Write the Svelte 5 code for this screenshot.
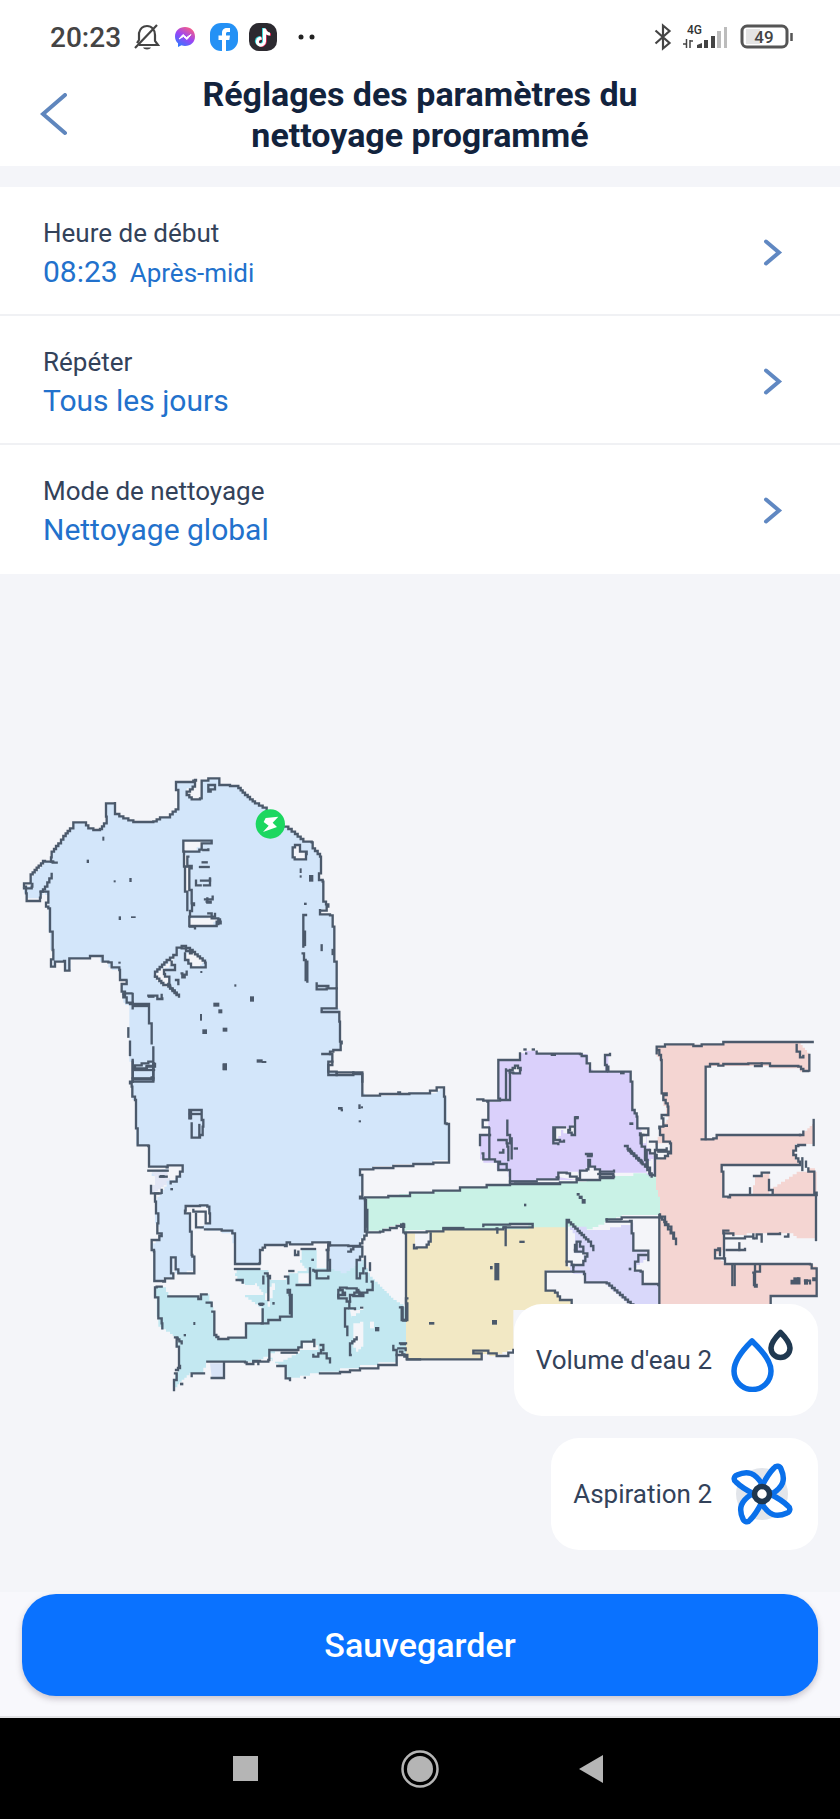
<script>
  const settings = [
    { label: 'Heure de début', value: '08:23', suffix: 'Après-midi' },
    { label: 'Répéter', value: 'Tous les jours' },
    { label: 'Mode de nettoyage', value: 'Nettoyage global' }
  ];

  // The floor plan is a grid scan: every slanted edge is drawn as small square steps.
  const CELL = 7;

  function trace(points) {
    const pts = points.trim().split(/\s+/).map((p) => p.split(',').map(Number));
    let [x, y] = pts[0];
    let d = `M${x} ${y}`;
    for (const [nx, ny] of pts.slice(1)) {
      const dx = nx - x;
      const dy = ny - y;
      const n = Math.max(1, Math.round(Math.min(Math.abs(dx), Math.abs(dy)) / CELL));
      for (let i = 1; i <= n; i++) {
        d += `H${Math.round(x + (dx * i) / n)}V${Math.round(y + (dy * i) / n)}`;
      }
      x = nx;
      y = ny;
    }
    return d;
  }

  const sheets = [
    {
      x: 0,
      y: 558,
      rooms: [
        ['#d3e6fa', '160,305 153,292 155,275 175,250 190,228 210,205 220,187 250,187 265,205 280,210 300,207 312,190 320,170 318,130 345,126 345,162 370,175 400,186 460,184 480,172 510,163 535,140 535,90 528,66 588,62 585,85 560,95 560,105 575,118 600,115 605,62 625,62 625,55 655,55 658,75 690,78 715,84 735,105 765,130 800,150 855,200 885,222 910,245 935,247 938,265 960,290 963,340 957,360 968,365 970,425 985,440 960,463 990,466 998,500 1003,555 1003,605 1010,605 1010,745 1018,785 1020,845 1022,870 1000,875 990,885 997,905 985,915 985,935 1010,945 1060,937 1087,942 1087,965 398,965 398,905 388,880 388,735 375,728 370,705 365,675 383,672 380,658 360,658 358,630 335,622 325,607 308,605 300,588 270,590 265,595 208,595 212,632 195,632 192,605 165,605 165,620 153,620 158,570 150,515 145,445 138,440 145,405 135,395 122,415 100,415 80,423 78,400 72,385 90,370 92,350 110,330 135,303 160,305']
      ],
      voids: [
        '550,242 605,242 605,262 590,272 555,275 550,242',
        '555,285 562,320 572,325 568,395 555,395 552,285',
        '568,475 625,470 650,485 640,498 568,498 568,475',
        '465,640 525,590 520,615 495,630 497,645 508,655 505,680 490,675 465,650',
        '560,580 580,580 612,608 600,620 575,620 570,600 560,595',
        '878,262 885,255 900,255 900,275 920,282 918,298 885,295 878,262'
      ],
      walls: [
        '170,308 158,305 153,292 155,275 175,250 190,228 210,205 220,187 250,187 265,205 280,210 300,207 312,190 320,170 318,130 345,126 345,162 370,175 400,186 460,184 480,172 510,163 535,140 535,90 528,90 528,66 555,66 580,62 588,60 585,80 570,95 560,97 560,105 575,118 600,115 605,62 625,62 625,55 655,55 658,75 690,78 715,84 735,105 765,130 800,150',
        '855,200 885,222 910,245 935,247 938,265 960,290 963,340 957,345 957,360 968,365 970,425 985,440 980,452 960,447 960,463 990,466 998,500 1003,555 1003,605 1010,605 1010,685 980,688 950,682 950,670',
        '955,678 985,683',
        '1010,685 1010,745 965,750', '965,756 1010,756 1018,785 1020,845 1025,850 1022,870 1000,875 990,882 967,882',
        '990,882 997,905 985,915 985,935 1010,945 1060,937 1087,942 1087,965',
        '160,305 135,303 110,330 92,350 92,370 72,380 78,400 80,423 120,413 122,395 135,380 155,342',
        '72,385 95,380 97,372',
        '122,395 135,395 145,405 145,428 138,440 145,445 150,515 158,570 160,598 153,600 153,620 165,620 165,605 192,603 195,632 212,632 208,595 265,595 270,588 300,588 308,605 325,607 335,622 358,630 360,660 383,660 380,672 365,675 365,695 375,705 370,712 380,728 398,728',
        '370,700 398,698 398,745', '390,732 447,732 447,790 455,800 455,850', '400,738 445,738',
        '385,805 385,830', '390,845 390,885', '460,862 460,905 445,910 405,922', '398,905 398,965', '405,928 440,920 465,912 460,960', '398,955 460,955',
        '635,242 553,242 550,242 550,275 590,275 605,262 605,250 635,245', '610,270 625,268',
        '552,275 552,320 562,320', '565,290 562,318 575,325 568,390 575,430 582,435 570,470 568,498 640,498 650,485 662,490 660,478', '555,320 555,395 562,398 562,450',
        '570,470 625,470 645,462', '625,460 635,475 655,485 655,492', '570,500 585,505',
        '608,307 620,307', '600,321 626,321', '588,362 588,376 602,376', '603,362 630,358', '612,376 630,376 630,355', '615,418 638,410', '620,425 632,428 622,415',
        '465,650 465,635 500,600 520,585 530,563 545,558 570,570 600,595 615,608 617,622 580,622 565,600 555,580',
        '465,650 490,675 510,685 537,710', '505,680 530,705', '505,672 508,650 495,642 492,630 515,630 525,615 515,605', '545,565 570,580 575,572',
        '528,660 535,672', '545,640 547,652 560,635', '445,707 470,707 472,717 487,715 485,705', '447,710 460,710',
        '878,262 885,255 900,255 900,275 920,282 918,298 890,298 878,285 878,262',
        '918,465 910,465 910,560', '915,515 915,555', '908,580 912,600 917,660', '920,605 922,665',
        '625,75 645,75 645,88 632,95 625,85 625,75', '965,556 965,570', '998,570 998,582'
      ],
      marks: [
        [307, 230, 6, 12], [260, 299, 7, 10], [341, 361, 6, 6], [388, 354, 7, 12], [356, 469, 7, 11], [393, 469, 14, 5],
        [355, 605, 7, 6], [899, 325, 6, 14], [899, 346, 6, 7], [927, 345, 13, 20], [912, 428, 8, 7], [703, 673, 6, 7],
        [750, 709, 12, 16], [640, 728, 18, 12], [655, 748, 12, 12], [600, 762, 6, 20], [607, 808, 14, 14],
        [668, 803, 14, 12], [668, 911, 13, 20], [770, 898, 18, 10], [785, 903, 14, 6], [601, 633, 6, 6]
      ]
    },
    {
      x: 0,
      y: 1458,
      rooms: [
        ['#c3e8f1', '470,680 490,682 505,710 595,715 605,703 620,703 635,740 640,780 645,835 685,835 738,828 740,790 785,788 785,740 735,705 765,690 725,665 705,640 710,630 800,630 805,660 850,660 865,640 920,625 900,600 905,570 950,570 990,610 1050,600 1085,600 1110,650 1140,680 1180,720 1210,740 1220,785 1218,880 1190,885 1190,907 1135,915 1080,925 1020,935 960,940 870,960 855,940 855,920 835,910 805,890 775,905 740,910 735,905 625,905 610,940 575,940 545,965 525,990 525,940 538,920 535,835 510,815 485,800 475,770 470,715 465,700'],
        ['#d3e6fa', '398,0 985,0 985,35 1010,45 1060,37 1087,42 1087,100 1095,107 1140,107 1195,102 1228,97 1290,100 1310,92 1330,80 1335,110 1340,190 1347,192 1347,300 1300,308 1240,312 1180,318 1120,324 1080,328 1080,345 1087,345 1087,395 1080,410 1095,415 1100,515 1080,550 1085,610 1040,640 985,620 990,547 937,547 935,553 870,553 855,558 795,558 780,570 778,610 705,612 705,550 697,520 665,512 620,508 570,500 577,585 583,590 583,632 560,640 530,640 525,592 513,592 520,652 495,655 490,665 463,663 460,575 455,550 478,535 478,500 470,490 465,420 500,370 455,340 500,322 447,320 447,258 413,256 408,205 405,120 397,110 395,75 398,0'],
        ['#e2e6f5', '455,336 500,336 515,350 500,375 465,400 455,375 465,350'],
        ['#d8e3f6', '630,910 672,907 672,952 635,950']
      ],
      voids: [
        '503,318 548,316 545,345 525,360 510,355 503,318',
        '557,440 615,438 628,460 628,490 600,508 572,515 570,462 557,455',
        '810,880 840,868 895,862 905,845 940,842 955,870 900,880 850,905 825,905 810,880',
        '1060,790 1080,785 1090,800 1090,860 1075,875 1060,850 1060,790',
        '1050,750 1090,740 1080,760 1055,775', '795,700 815,670 825,690 810,740 795,700',
        '1110,785 1122,785 1122,805 1110,805', '730,675 765,670 790,705 740,705', '895,640 930,635 930,670 895,670', '950,560 985,560 980,625 950,620'
      ],
      walls: [
        '398,0 398,65 390,70 395,80 397,110 405,120 408,205 413,256 445,258 447,320 500,322 503,316 548,316 548,335 540,350 530,365 512,370',
        '400,25 440,18 462,10', '405,30 462,30', '398,65 430,65 460,55 460,10', '400,58 455,52',
        '445,332 503,332', '480,350 500,350', '453,378 453,400 485,402 485,390', '475,400 465,425 468,460 475,490 472,520 485,528 478,540 455,545 455,570 462,575 463,663 490,665 495,655 520,652 520,640 513,628 513,592 527,592 527,628 535,640 565,640 583,632 583,590 577,585 575,515 570,460 555,452 557,438 600,436 622,440 628,460 630,490 617,490 617,455 580,450',
        '588,462 588,502 608,502', '615,508 665,512 697,520 705,550 705,612 778,610 780,570 795,555 855,558 860,547 870,553 935,553 937,547 990,547 990,556 1045,558 1080,550 1100,515 1095,415 1080,410 1087,395 1087,345 1080,345 1080,328 1120,324 1180,318 1240,312 1300,308 1347,300 1347,192 1340,190 1335,110 1332,82 1320,82 1310,92 1290,100 1228,102 1200,97 1195,102 1140,107 1095,107 1087,100 1087,42 1060,37 1010,45 985,35 985,15 997,5',
        '1100,450 1102,510', '1095,420 1098,500', '705,627 778,627', '990,556 985,600 990,632 940,630', '983,570 983,630', '905,567 945,567', '980,570 985,548', '885,572 885,585 895,575', '945,635 950,655 985,650',
        '930,625 930,675 890,675', '1045,575 1060,560 1087,560 1087,590 1080,600 1070,625 1070,655 1080,640 1090,625 1095,590', '1110,610 1110,630', '1097,640 1100,665', '1115,665 1118,690 1085,705 1070,685 1040,683 1020,690 1015,715 1040,725 1050,705 1075,690', '1020,690 1035,705 1015,710', '1050,725 1048,745 1065,747', '1060,708 1090,703',
        '485,680 470,682 465,712 475,720 475,775 485,790 487,805', '505,709 570,709 595,717 603,703 620,703', '620,728 635,738', '637,755 643,785 643,825 655,837 685,833 738,828 738,790 785,790 805,780 840,770 875,763 875,705 863,690', '785,790 788,748', '868,690 870,760', '710,660 728,668', '795,640 810,655 805,720', '790,650 790,670', '855,650 865,670', '868,633 880,633', '778,732 790,732',
        '525,832 545,850', '533,835 530,860 537,870 537,920', '528,930 540,918', '525,940 530,960 522,970 522,990', '575,948 575,940 612,940', '635,954 672,954 672,908', '622,905 735,907 740,912 760,903 780,905 805,900 808,870 895,862 905,845 940,840 943,858', '845,878 890,878', '832,918 855,918 857,955 870,960', '760,905 775,912', '962,855 970,870 955,890 940,885', '970,880 980,895 990,907',
        '960,940 1020,936 1080,925 1135,915 1190,907 1190,870 1180,858', '1195,865 1217,870', '1190,885 1222,885 1222,898 1260,898', '1043,745 1035,760 1035,800 1042,825', '1052,885 1050,850 1070,832',
        '1222,715 1218,782 1210,780 1205,742',
        '568,175 568,150 603,150 605,180 610,200 608,225 600,233 575,233 575,190', '570,162 600,162', '598,195 598,230', '573,155 573,175'
      ],
      marks: [
        [668, 10, 13, 20], [1014, 141, 14, 8], [1022, 147, 7, 7], [1075, 133, 7, 14], [1082, 139, 7, 6], [1076, 181, 7, 6],
        [511, 384, 8, 7], [580, 786, 6, 9], [551, 822, 7, 7], [540, 968, 10, 8], [911, 950, 7, 6], [1125, 801, 13, 13],
        [934, 596, 8, 7], [817, 726, 7, 8], [1200, 850, 18, 6], [1080, 740, 10, 6], [480, 345, 14, 8], [778, 728, 12, 10]
      ]
    },
    {
      x: 1200,
      y: 1338,
      rooms: [
        ['#c9f2e6', '-105,535 -35,528 30,516 100,512 180,502 260,495 330,490 480,485 640,468 700,460 768,460 775,520 780,545 780,585 665,592 560,635 500,628 400,630 20,640 10,612 -10,618 -50,632 -95,635'],
        ['#f2e8c4', '18,640 80,632 130,628 385,622 500,625 500,735 515,750 437,755 437,812 465,818 480,840 515,845 515,870 345,870 340,990 290,1008 245,995 245,1018 20,1018 18,640'],
        ['#dad0fb', '295,120 355,120 360,100 375,92 410,100 540,102 560,108 565,140 578,155 610,155 615,105 628,105 625,155 690,155 692,185 697,270 710,290 712,320 730,345 740,385 750,400 765,415 765,460 755,472 740,458 640,465 480,487 340,490 325,450 300,450 290,428 250,418 240,345 265,345 265,245 300,240 295,120'],
        ['#d9d8fa', '505,620 560,630 630,622 695,608 700,690 745,695 740,720 700,750 720,755 728,792 775,795 775,870 710,870 620,790 555,787 552,762 520,755 510,735 500,720'],
        ['#f4d5d2', '772,80 800,74 970,68 1195,68 1228,105 1228,155 1200,145 1110,138 920,135 915,355 950,345 1200,345 1243,305 1243,372 1185,380 1185,420 1200,435 965,437 968,533 990,525 1245,525 1250,655 1200,655 1180,640 1040,645 980,640 975,690 945,710 970,730 1230,733 1250,745 1250,828 1112,828 1112,870 780,870 780,530 774,510 768,470 765,420 810,400 810,370 765,375 780,325 805,290 790,225 783,120 770,100'],
        ['#f4d5d2', '1120,500 1190,455 1225,445 1245,455 1250,522 1115,525'],
        ['#f4d5d2', '1052,522 1065,470 1100,455 1108,522']
      ],
      voids: [
        '330,145 345,135 360,155 340,162', '460,320 490,318 500,325 520,310 525,340 490,330 475,365 460,370 460,320',
        '470,470 475,455 535,460 560,440 600,455 600,475 530,480', '412,478 475,472 478,486 412,486',
        '45,640 90,640 92,665 80,682 45,680', '503,620 525,650 525,700 560,705 550,735 510,740 503,620', '720,335 740,330 738,370 725,380', '735,430 760,410 760,460 740,450', '980,665 1040,650 1040,690 985,690', '330,614 385,612 385,622 330,624'
      ],
      walls: [
        '-105,532 -35,528 30,518 100,512 180,502 260,495 330,492 480,487 530,480 600,474 640,467', '412,478 475,472',
        '345,490 480,490', '330,484 410,484', '-95,637 -60,635 -50,630 -10,618 10,612', '10,622 10,637 80,634 130,628 195,628 310,622 330,622 385,622 398,612 330,614 250,618', '130,624 190,624',
        '290,625 292,638', '312,622 317,675', '15,640 18,850 22,900 10,900 8,862 0,862', '0,970 18,970', '0,995 20,1018 245,1018 245,1000 220,992 255,992 265,1000 290,1008 325,998 340,990',
        '92,640 92,665 80,682 50,685 42,675', '500,735 500,600 520,620 545,645 565,665 580,690', '500,725 515,735 520,755 437,755 437,812 465,818 480,840 515,845 515,860',
        '520,755 552,762 555,787 620,790 660,825 700,860', '525,690 530,665 545,665 540,680 550,700 562,710 550,735 520,740', '525,675 525,695 545,695',
        '620,598 620,605 690,603 695,640 700,692 745,695 745,720', '620,598 665,600 665,592 780,583', '740,705 715,705 715,725 705,745 705,752 722,755 728,792 775,795',
        '778,585 778,860', '785,590 795,615 812,640 828,672', '780,592 805,620 822,655',
        '232,238 250,240', '250,242 300,240 330,237 330,150 345,137 362,150 360,160 340,158 318,145 318,235', '300,236 295,225 295,120 355,120 360,100', '410,95 410,101 540,102 545,108 560,108 560,130 570,155 610,155 620,135 615,105 630,102', '622,140 625,155 690,155 692,185 697,270 710,290 712,325 745,325 745,345 720,340 722,370', '730,345 725,380 735,420 750,465 765,470 765,400 750,390',
        '262,245 265,300 248,305 248,322 270,322 268,345 240,345 240,375', '270,345 268,415', '248,400 250,418 285,425 300,428 295,450 315,450 320,432 300,430', '325,450 330,487',
        '322,302 322,345 330,355 330,370 322,380 325,420', '330,355 335,415', '295,360 320,370', '300,398 310,390',
        '533,292 525,295 525,345 505,330 510,320 525,310', '495,322 460,322 460,370 475,372', '465,325 465,360 480,365 492,362',
        '470,472 475,458 500,460 510,470 530,475 540,452 560,448 565,420 570,440 600,455 642,452', '600,470 642,470', '600,458 600,475', '595,462 640,462', '558,402 575,405',
        '675,378 690,395 715,420 735,440 755,470', '685,392 725,430', '745,390 740,440',
        '770,100 770,80 795,80 795,73 870,73 880,78 900,78 905,73 970,73 970,66 1238,66', '772,90 783,120 785,220 800,225 790,240 803,260 805,285 785,295 790,320 778,325 780,345 790,365 810,370 813,400 795,415 770,405 765,390 800,385', '750,365 770,372 770,390', '775,395 810,395',
        '1200,345 1210,335', '905,358 940,355 950,345 1200,345', '917,357 917,140 930,132 955,137 970,132 1045,130 1065,130 1090,130 1110,138 1195,140 1210,153 1228,155 1228,105', '1190,75 1190,95 1200,112 1210,108', '1065,138 1085,138 1085,130',
        '1241,300 1241,375', '1215,375 1195,378 1180,405 1195,425 1200,435 965,437 965,455 970,530 985,532 990,525 1220,525 1250,518 1243,490 1243,455 1225,445', '1207,415 1207,450', '1062,468 1085,458 1107,458', '1107,480 1107,510 1118,520', '1050,505 1050,522', '1218,440 1218,425',
        '1248,525 1248,660', '985,632 970,640 972,715 945,710 945,690 955,685 960,705', '975,655 1020,655 1035,650 1060,640 1060,655', '975,640 1000,645', '1065,655 1070,643 1085,645 1085,665', '1105,642 1140,640', '980,690 1035,687', '1018,670 1018,690', '1155,650 1165,643', '972,715 975,732 1230,733 1235,745 1250,747 1250,775 1240,780 1250,800 1250,828 1112,828 1112,860',
        '997,735 997,795', '1004,735 1004,795', '1065,735 1065,755 1080,750 1080,735', '1060,758 1062,795 1070,800 1065,755', '1175,783 1195,775 1198,790 1175,785', '1215,782 1230,790'
      ],
      marks: [
        [372, 551, 7, 8], [530, 519, 9, 8], [536, 527, 12, 10], [545, 537, 12, 14], [358, 662, 16, 7], [283, 729, 15, 52], [270, 738, 8, 10],
        [87, 906, 16, 8], [276, 900, 15, 14], [688, 307, 12, 8], [341, 382, 13, 7], [370, 85, 10, 7], [395, 85, 10, 7],
        [375, 97, 7, 7], [452, 101, 16, 7], [660, 155, 14, 8], [686, 743, 8, 8], [560, 402, 18, 10], [1180, 772, 16, 10], [1212, 778, 12, 16],
        [524, 288, 12, 10], [790, 313, 14, 8], [0, 610, 16, 14]
      ]
    }
  ];
</script>

<div class="screen">
  <div class="status">
    <div class="group">
      <span class="clock">20:23</span>
      <svg width="26" height="28" viewBox="0 0 26 28" fill="none" stroke="#444" stroke-width="2.200">
        <path d="M5 22H24L21 18V12C21 7 18 3 13 3C9 3 6 6 5 10V17L3 20M23 2L1 25" />
        <path d="M9 24.500H17C16 27 10 27 9 24.500Z" fill="#444" stroke="none" />
      </svg>
      <svg class="messenger" width="20" height="20" viewBox="0 0 20 20">
        <defs>
          <linearGradient id="msg" x1=".2" y1="1" x2=".8" y2="0">
            <stop offset="0" stop-color="#2b7cff" /><stop offset=".5" stop-color="#9a45f5" /><stop offset="1" stop-color="#ff5f7d" />
          </linearGradient>
        </defs>
        <path d="M10 0C4 0 0 4 0 9.500C0 12.500 1 14.500 3 16.300V20L6.500 18.300C7.500 18.700 9 19 10 19C16 19 20 15 20 9.500S16 0 10 0Z" fill="url(#msg)" />
        <path d="M4 12L8 7.500L11.500 10.500L16 7.500L12 12.500L8.500 9.500Z" fill="#fff" stroke="#fff" />
      </svg>
      <svg width="28" height="28" viewBox="0 0 28 28">
        <rect width="28" height="28" rx="11" fill="#2491f5" />
        <path d="M12 28V17H8.500V12.500H12V10C12 6.500 14 5 17 5H20V9H18C16.500 9 16 9.600 16 11V12.500H20L19.300 17H16V28Z" fill="#fff" />
      </svg>
      <svg width="28" height="28" viewBox="0 0 28 28" fill="none">
        <rect width="28" height="28" rx="10" fill="#2c2a30" />
        <path d="M14.500 5V18C14.500 21 11.500 22.500 9 21S7 16 9.500 15L11.500 14.500M14.500 6C15.500 9 17.500 10.500 20 10.500" stroke="#35dbe0" stroke-width="3" />
        <path d="M16.500 6V18.500C16.500 22 13 23.500 10.500 22S8.500 17 11 16L13 15.500M16.500 7C17.500 10 19.500 11.500 22 11.500" stroke="#ef2e60" stroke-width="2.500" />
        <path d="M15.500 5.500V18.500C15.500 21.500 12 23 9.800 21.500S8 16.500 10.500 15.500L12.500 15M15.500 6.500C16.500 9.500 18.500 11 21 11" stroke="#fff" stroke-width="3" />
      </svg>
      <svg class="more" width="18" height="6" viewBox="0 0 18 6" fill="#222"><circle cx="3" cy="3" r="2.500" /><circle cx="14" cy="3" r="2.500" /></svg>
    </div>
    <div class="group">
      <svg width="18" height="28" viewBox="0 0 18 28" fill="none" stroke="#444" stroke-width="2.200">
        <path d="M1.500 7.500L15.500 20L9 25.500V2.500L15.500 8L1.500 20.500" />
      </svg>
      <svg class="signal" width="46" height="28" viewBox="0 0 46 28">
        <text x="4" y="11" font-size="12" font-weight="500" fill="#333">4G</text>
        <path d="M0 21H3.500V16M3.500 17V25M7 25V17M7 18H10" fill="none" stroke="#444" stroke-width="1.500" />
        <path d="M14 25V22L19 20V25ZM21 17H25V25H21ZM28 13H32V25H28Z" fill="#444" />
        <path d="M34 8H38V25H34ZM41 4H44V25H41Z" fill="#bcbcbc" />
      </svg>
      <svg width="54" height="26" viewBox="0 0 54 26">
        <rect x="6" y="5" width="14" height="15" fill="#e4e4e4" />
        <rect x="2" y="2" width="45" height="21" rx="5" fill="none" stroke="#555" stroke-width="3" />
        <path d="M51.500 9V17" stroke="#555" stroke-width="2.500" />
        <text x="24" y="19" text-anchor="middle" font-size="17" font-weight="500" fill="#444">49</text>
      </svg>
    </div>
  </div>

  <header>
    <button class="back" aria-label="Retour">
      <svg width="28" height="44" viewBox="0 0 28 44" fill="none" stroke="#5f86bd" stroke-width="4" stroke-linecap="round"><path d="M25 2L3 21L25 40" /></svg>
    </button>
    <h1>Réglages des paramètres du nettoyage programmé</h1>
  </header>

  <div class="settings">
    {#each settings as item}
      <button class="row">
        <span class="texts">
          <span class="label">{item.label}</span>
          <span class="value">{item.value}{#if item.suffix}<span class="suffix">{item.suffix}</span>{/if}</span>
        </span>
        <svg width="20" height="28" viewBox="0 0 20 28" fill="none" stroke="#6088c2" stroke-width="4" stroke-linecap="round"><path d="M3 3.500L16 14.500L3 25.500" /></svg>
      </button>
    {/each}
  </div>

  <main>
    <svg class="plan" viewBox="0 0 2520 3054" preserveAspectRatio="xMidYMin meet" role="img" aria-label="Plan du logement">
      {#each sheets as s}
        <g transform="translate({s.x} {s.y})">
          {#each s.rooms as [fill, pts]}<path d={trace(pts)} {fill} />{/each}
        </g>
      {/each}
      {#each sheets as s}
        <g transform="translate({s.x} {s.y})">
          {#each s.voids as v}<path d={trace(v)} fill="#f4f5f9" />{/each}
          {#each s.walls as w}<path d={trace(w)} fill="none" stroke="#4b596b" stroke-width="7" stroke-linecap="square" />{/each}
          {#each s.marks as [x, y, w, h]}<rect {x} {y} width={w} height={h} fill="#4b596b" />{/each}
        </g>
      {/each}
      <g transform="translate(811 750)">
        <circle r="44" fill="#1cd760" />
        <path d="M-14 -18L24 -22L7 -4L20 9L-22 24L-5 5L-20 -6Z" fill="#fff" />
      </g>
    </svg>

    <div class="levels">
      <button class="level">
        <span>Volume d'eau 2</span>
        <svg width="64" height="64" viewBox="0 0 64 64" fill="none" stroke-width="5.500">
          <path d="M22 13C18 17 4 30 4 43A18.500 18.500 0 0 0 41 43C41 30 26 17 22 13Z" stroke="#0a70ea" stroke-linejoin="round" />
          <path d="M50.500 4.500C47 8 41 14 41 20A9.500 9.500 0 0 0 60 20C60 14 54 8 50.500 4.500Z" stroke="#1f3850" stroke-linejoin="round" />
        </svg>
      </button>
      <button class="level">
        <span>Aspiration 2</span>
        <svg width="64" height="64" viewBox="0 0 64 64" fill="none" stroke-width="5.500">
          <circle cx="32" cy="32" r="26" fill="#e2e5ea" />
          <g fill="#fff" stroke="#0a70ea" stroke-linejoin="round">
            {#each [0, 90, 180, 270] as a}
              <path transform="rotate({a} 32 32)" d="M32 24C35 18 39 11 44 6C46 3 50 4 51 7C56 18 53 25 42 32Z" />
            {/each}
          </g>
          <circle cx="32" cy="32" r="7.500" fill="#fff" stroke="#1f3850" />
        </svg>
      </button>
    </div>
  </main>

  <footer><button class="save">Sauvegarder</button></footer>

  <nav>
    <button aria-label="Applications récentes"><svg width="40" height="40" viewBox="0 0 40 40"><rect x="7" y="7" width="25" height="25" fill="#b5b5b5" /></svg></button>
    <button aria-label="Accueil"><svg width="40" height="40" viewBox="0 0 40 40"><circle cx="20" cy="20" r="17.500" fill="none" stroke="#b5b5b5" stroke-width="2.500" /><circle cx="20" cy="20" r="13" fill="#b5b5b5" /></svg></button>
    <button aria-label="Précédent"><svg width="40" height="40" viewBox="0 0 40 40"><path d="M5 20L29 6V34Z" fill="#b5b5b5" /></svg></button>
  </nav>
</div>

<style>
  :global(body) { margin: 0; background: #f4f5f9; }
  .screen { font-family: Roboto, sans-serif; min-height: 100vh; display: flex; flex-direction: column; background: #f4f5f9; color: #33425a; }
  button { font: inherit; color: inherit; border: 0; background: none; padding: 0; cursor: pointer; }
  svg { display: block; flex: none; }

  .status { display: flex; justify-content: space-between; align-items: center; height: 74px; padding: 0 46px 0 50px; box-sizing: border-box; background: #fff; }
  .group { display: flex; align-items: center; gap: 11px; }
  .clock { font-size: 28px; font-weight: 500; color: #444; margin-right: 2px; }
  .messenger { margin: 0 4px; }
  .more { margin-left: 10px; }

  header { display: grid; grid-template-columns: 108px 1fr 108px; align-items: center; padding-bottom: 10px; background: #fff; }
  .back { justify-self: start; padding-left: 40px; }
  h1 { margin: 0 auto; max-width: 480px; text-align: center; font-size: 34px; line-height: 41px; font-weight: 700; color: #12233d; }

  .settings { margin-top: 21px; }
  .row { display: flex; width: 100%; align-items: center; justify-content: space-between; padding: 26px 57px 23px 43px; box-sizing: border-box; text-align: left; background: #fff; border-bottom: 2px solid #f0f1f4; }
  .row:last-child { border-bottom-color: #fff; }
  .texts { display: flex; flex-direction: column; }
  .label { font-size: 26px; line-height: 40px; }
  .value { font-size: 30px; line-height: 38px; color: #2271cc; }
  .suffix { font-size: 26px; line-height: 1; margin-left: 12px; }

  main { position: relative; flex: 1; }
  .plan { width: 100%; height: auto; }
  .levels { position: absolute; right: 22px; bottom: 42px; display: flex; flex-direction: column; align-items: flex-end; gap: 22px; }
  .level { display: flex; align-items: center; gap: 18px; height: 112px; padding: 0 24px 0 22px; border-radius: 28px; background: #fff; font-size: 26px; }

  footer { padding: 2px 22px 20px; background: #f8f8fc; border-bottom: 2px solid #e2e2e5; }
  .save { display: block; width: 100%; height: 102px; border-radius: 34px; background: #0a72ff; color: #fff; font-size: 34px; font-weight: 500; box-shadow: 0 3px 6px #50405048; }

  nav { display: flex; justify-content: center; align-items: center; gap: 134px; height: 101px; background: #000; }
</style>
